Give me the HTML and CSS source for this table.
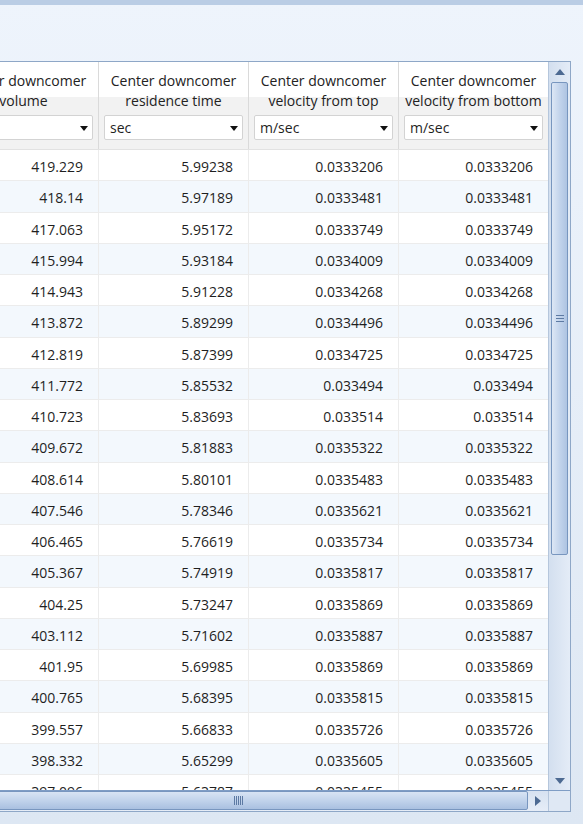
FILE: index.html
```html
<!DOCTYPE html>
<html>
<head>
<meta charset="utf-8">
<link rel="stylesheet" href="styles.css">
</head>
<body>
<div class="app">
  <div class="topbar"></div>
  <div class="grid">
    <div class="main">
      <div class="viewport">
        <div class="table">
          <div class="head">
            <div class="hcell"><div class="htitle">Center downcomer<br>volume</div><div class="dd"><span></span><i class="arrow"></i></div></div>
            <div class="hcell"><div class="htitle">Center downcomer<br>residence time</div><div class="dd"><span>sec</span><i class="arrow"></i></div></div>
            <div class="hcell"><div class="htitle">Center downcomer<br>velocity from top</div><div class="dd"><span>m/sec</span><i class="arrow"></i></div></div>
            <div class="hcell"><div class="htitle">Center downcomer<br>velocity from bottom</div><div class="dd"><span>m/sec</span><i class="arrow"></i></div></div>
          </div>
          <div class="rows">
            <div class="row"><div class="cell">419.229</div><div class="cell">5.99238</div><div class="cell">0.0333206</div><div class="cell">0.0333206</div></div>
            <div class="row"><div class="cell">418.14</div><div class="cell">5.97189</div><div class="cell">0.0333481</div><div class="cell">0.0333481</div></div>
            <div class="row"><div class="cell">417.063</div><div class="cell">5.95172</div><div class="cell">0.0333749</div><div class="cell">0.0333749</div></div>
            <div class="row"><div class="cell">415.994</div><div class="cell">5.93184</div><div class="cell">0.0334009</div><div class="cell">0.0334009</div></div>
            <div class="row"><div class="cell">414.943</div><div class="cell">5.91228</div><div class="cell">0.0334268</div><div class="cell">0.0334268</div></div>
            <div class="row"><div class="cell">413.872</div><div class="cell">5.89299</div><div class="cell">0.0334496</div><div class="cell">0.0334496</div></div>
            <div class="row"><div class="cell">412.819</div><div class="cell">5.87399</div><div class="cell">0.0334725</div><div class="cell">0.0334725</div></div>
            <div class="row"><div class="cell">411.772</div><div class="cell">5.85532</div><div class="cell">0.033494</div><div class="cell">0.033494</div></div>
            <div class="row"><div class="cell">410.723</div><div class="cell">5.83693</div><div class="cell">0.033514</div><div class="cell">0.033514</div></div>
            <div class="row"><div class="cell">409.672</div><div class="cell">5.81883</div><div class="cell">0.0335322</div><div class="cell">0.0335322</div></div>
            <div class="row"><div class="cell">408.614</div><div class="cell">5.80101</div><div class="cell">0.0335483</div><div class="cell">0.0335483</div></div>
            <div class="row"><div class="cell">407.546</div><div class="cell">5.78346</div><div class="cell">0.0335621</div><div class="cell">0.0335621</div></div>
            <div class="row"><div class="cell">406.465</div><div class="cell">5.76619</div><div class="cell">0.0335734</div><div class="cell">0.0335734</div></div>
            <div class="row"><div class="cell">405.367</div><div class="cell">5.74919</div><div class="cell">0.0335817</div><div class="cell">0.0335817</div></div>
            <div class="row"><div class="cell">404.25</div><div class="cell">5.73247</div><div class="cell">0.0335869</div><div class="cell">0.0335869</div></div>
            <div class="row"><div class="cell">403.112</div><div class="cell">5.71602</div><div class="cell">0.0335887</div><div class="cell">0.0335887</div></div>
            <div class="row"><div class="cell">401.95</div><div class="cell">5.69985</div><div class="cell">0.0335869</div><div class="cell">0.0335869</div></div>
            <div class="row"><div class="cell">400.765</div><div class="cell">5.68395</div><div class="cell">0.0335815</div><div class="cell">0.0335815</div></div>
            <div class="row"><div class="cell">399.557</div><div class="cell">5.66833</div><div class="cell">0.0335726</div><div class="cell">0.0335726</div></div>
            <div class="row"><div class="cell">398.332</div><div class="cell">5.65299</div><div class="cell">0.0335605</div><div class="cell">0.0335605</div></div>
            <div class="row"><div class="cell">397.096</div><div class="cell">5.63787</div><div class="cell">0.0335455</div><div class="cell">0.0335455</div></div>
          </div>
        </div>
      </div>
      <div class="vscroll">
        <div class="vbtn"><svg width="10" height="6" viewBox="0 0 10 6"><path d="M0 6 L5 0 L10 6 Z" fill="#4d6a92"/></svg></div>
        <div class="vtrack">
          <div class="vthumb"><span class="vgrip"></span></div>
        </div>
        <div class="vbtn"><svg width="10" height="6" viewBox="0 0 10 6"><path d="M0 0 L5 6 L10 0 Z" fill="#4d6a92"/></svg></div>
      </div>
    </div>
    <div class="hbar">
      <div class="hscroll">
        <div class="htrack">
          <div class="hthumb"><span class="hgrip"></span></div>
        </div>
        <div class="hbtn"><svg width="6" height="10" viewBox="0 0 6 10"><path d="M0 0 L6 5 L0 10 Z" fill="#4d6a92"/></svg></div>
      </div>
      <div class="corner"></div>
    </div>
  </div>
</div>
</body>
</html>
```

FILE: styles.css
```css
html, body {
  margin: 0;
  padding: 0;
}
body {
  font-family: "Open Sans", "Noto Sans", sans-serif;
  color: #1f1f1f;
}
.app {
  width: 583px;
  height: 824px;
  overflow: hidden;
  background: linear-gradient(#eef4fc, #dde7f3);
}
.topbar {
  height: 5px;
  background: #bacde5;
}
.grid {
  margin-top: 56px;
  width: 570px;
  border: 1px solid #8ea7c7;
  border-left: none;
  background: #fff;
}
.main {
  display: flex;
  height: 728px;
}
.viewport {
  width: 548px;
  overflow: hidden;
}
.table {
  margin-left: -51px;
  width: 600px;
}
.head {
  display: flex;
  height: 87px;
  border-bottom: 1px solid #e2e2e2;
  background: linear-gradient(#ffffff 0, #ffffff 35px, #f2f2f2 35px, #f2f2f2 100%);
}
.hcell {
  width: 149px;
  border-right: 1px solid #dadada;
  display: flex;
  flex-direction: column;
  align-items: stretch;
}
.htitle {
  text-align: center;
  font-size: 14px;
  line-height: 20px;
  padding-top: 9px;
  height: 44px;
  white-space: nowrap;
  color: #222;
}
.dd {
  margin: 0 5px 0 5px;
  height: 23px;
  border: 1px solid #d3d3d3;
  border-radius: 2px;
  background: #fff;
  display: flex;
  align-items: center;
  justify-content: space-between;
  padding: 0 4px 0 5px;
  font-size: 14px;
}
.arrow {
  width: 0;
  height: 0;
  border-left: 4px solid transparent;
  border-right: 4px solid transparent;
  border-top: 5px solid #111;
  margin-top: 1px;
}
.row {
  display: flex;
  height: 31.25px;
  box-sizing: border-box;
  border-bottom: 1px solid #ececec;
}
.row:nth-child(even) {
  background: #f3f8fd;
}
.cell {
  border-right: 1px solid #ececec;
  text-align: right;
  padding-right: 15px;
  padding-top: 3px;
  width: 134px;
  font-size: 14px;
  line-height: 27px;
  white-space: nowrap;
}
.vscroll {
  width: 21px;
  border-left: 1px solid #b5c6dc;
  background: linear-gradient(90deg, #d3dfef, #e4ecf7);
  display: flex;
  flex-direction: column;
}
.vbtn {
  height: 19px;
  display: flex;
  align-items: center;
  justify-content: center;
}
.vtrack {
  flex: 1;
  padding: 1px 2px 0 2px;
}
.vthumb {
  height: 471px;
  border: 1px solid #7896bf;
  border-radius: 2px;
  background: linear-gradient(90deg, #dde7f5, #c3d4ec 50%, #aec4e2);
  display: flex;
  align-items: center;
  justify-content: center;
}
.vgrip {
  width: 8px;
  height: 5px;
  border-top: 1px solid #5d7aa3;
  border-bottom: 1px solid #5d7aa3;
  background: linear-gradient(transparent 2px, #5d7aa3 2px, #5d7aa3 3px, transparent 3px);
}
.hbar {
  display: flex;
  height: 20px;
  border-top: 1px solid #7f9dc5;
}
.hscroll {
  width: 548px;
  display: flex;
  background: linear-gradient(#d7e2f1, #e6edf7);
}
.htrack {
  flex: 1;
  padding-bottom: 1px;
  overflow: hidden;
}
.hthumb {
  height: 17px;
  margin-left: -52px;
  border: 1px solid #7896bf;
  border-radius: 2px;
  background: linear-gradient(#d8e4f4, #c1d3eb 50%, #a9c0e0);
  display: flex;
  align-items: center;
  justify-content: center;
}
.hgrip {
  width: 9px;
  height: 9px;
  background: repeating-linear-gradient(90deg, #5d7aa3 0, #5d7aa3 1px, transparent 1px, transparent 2px);
}
.hbtn {
  width: 20px;
  display: flex;
  align-items: center;
  justify-content: center;
}
.corner {
  width: 21px;
  border-left: 1px solid #b5c6dc;
  background: #dfe8f4;
}
```
